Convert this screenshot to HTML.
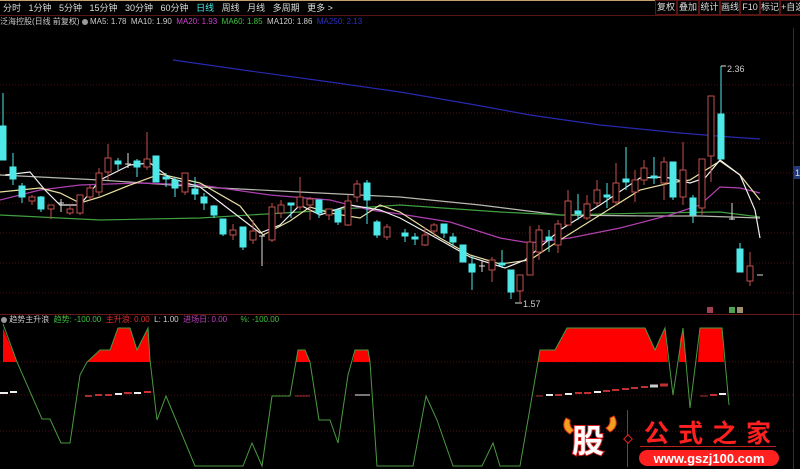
<!DOCTYPE html>
<html><head><meta charset="utf-8"><style>
html,body{margin:0;padding:0;background:#000;width:800px;height:469px;overflow:hidden;position:relative;font-family:"Liberation Sans","Noto Sans CJK SC",sans-serif}
.t{position:absolute;white-space:nowrap;font-size:8px;line-height:12px}
.b{border:1px solid #5a1515;text-align:center;white-space:nowrap;overflow:hidden;box-sizing:border-box;height:15px}
</style></head><body>
<div style="position:absolute;left:0;top:0;width:800px;height:1px;background:#c8a070"></div>
<div style="position:absolute;left:0;top:15px;width:800px;height:1px;background:#5a1515"></div>
<div class="t" style="left:3px;top:2px;color:#ddd;font-size:9px;word-spacing:0">分时&nbsp;&nbsp; 1分钟&nbsp;&nbsp; 5分钟&nbsp;&nbsp; 15分钟&nbsp;&nbsp; 30分钟&nbsp;&nbsp; 60分钟&nbsp;&nbsp; <span style="color:#4ee">日线</span>&nbsp;&nbsp; 周线&nbsp;&nbsp; 月线&nbsp;&nbsp; 多周期&nbsp;&nbsp; 更多 &gt;</div>
<div style="position:absolute;left:655px;top:0;height:15px;display:flex;font-size:9px;color:#ddd;line-height:13px">
<span class="b" style="width:22px">复权</span><span class="b" style="width:22px">叠加</span><span class="b" style="width:21px">统计</span><span class="b" style="width:20px">画线</span><span class="b" style="width:20px">F10</span><span class="b" style="width:20px">标记</span><span class="b" style="width:22px">+自选</span></div>
<div class="t" style="left:0;top:16px;color:#ccc">泛海控股(日线 前复权) <span style="display:inline-block;width:6px;height:6px;border-radius:50%;background:#999;vertical-align:-1px"></span> MA5: 1.78&nbsp; MA10: 1.90&nbsp; <span style="color:#d040d0">MA20: 1.93</span>&nbsp; <span style="color:#40c040">MA60: 1.85</span>&nbsp; MA120: 1.86&nbsp; <span style="color:#3030c0">MA250: 2.13</span></div>
<div class="t" style="left:1px;top:314px;color:#ccc"><span style="display:inline-block;width:6px;height:6px;border-radius:50%;background:#999;vertical-align:-1px"></span> 趋势主升浪&nbsp; <span style="color:#40c040">趋势: -100.00</span>&nbsp; <span style="color:#e03030">主升浪: 0.00</span>&nbsp; L: 1.00&nbsp; <span style="color:#c040c0">进场日: 0.00</span>&nbsp;&nbsp;&nbsp;&nbsp;&nbsp; <span style="color:#40c040">%: -100.00</span></div>
<svg width="800" height="469" style="position:absolute;left:0;top:0">
<g stroke="#4a1010" stroke-dasharray="1,2" stroke-width="1">
<line x1="0" y1="85" x2="793" y2="85"/><line x1="0" y1="113" x2="793" y2="113"/><line x1="0" y1="143" x2="793" y2="143"/><line x1="0" y1="173" x2="793" y2="173"/><line x1="0" y1="203" x2="793" y2="203"/><line x1="0" y1="233" x2="793" y2="233"/><line x1="0" y1="263" x2="793" y2="263"/><line x1="0" y1="293" x2="793" y2="293"/>
<line x1="0" y1="431" x2="793" y2="431"/><line x1="0" y1="395" x2="793" y2="395"/><line x1="0" y1="362" x2="793" y2="362"/>
</g>
<line x1="0" y1="314.5" x2="800" y2="314.5" stroke="#6a1818"/>
<line x1="793.5" y1="28" x2="793.5" y2="469" stroke="#6a1818"/>
<rect x="794" y="166" width="6" height="13" fill="#223a7a"/>
<text x="795" y="176" fill="#ddd" font-size="9">1.</text>
<g fill="none" stroke-width="1.2">
<polyline stroke="#2828b0" points="173,60 250,71 330,82 400,92 470,104 530,115 600,125 680,133 730,137 760,139"/>
<polyline stroke="#b8b8b0" points="0,175 100,180 200,187 300,192 400,197 480,205 560,215 650,216 700,216 760,218"/>
<polyline stroke="#40a040" points="0,215 100,220 200,218 300,212 400,205 500,212 560,215 650,213 720,212 760,217"/>
<polyline stroke="#b040b0" points="0,200 40,190 80,185 140,183 200,185 270,195 330,200 370,210 400,214 450,222 500,238 530,243 570,238 620,228 670,215 700,205 720,187 740,188 760,193"/>
<polyline stroke="#e8e0a0" points="0,192 40,188 60,193 80,203 100,197 130,185 160,174 200,183 240,206 263,235 290,221 310,207 330,213 360,218 380,205 400,212 440,238 470,255 500,264 530,260 560,240 600,215 640,190 670,183 690,180 720,161 740,175 760,200"/>
<polyline stroke="#f0f0f0" points="5,175 30,172 45,190 60,205 80,205 100,180 130,165 150,163 170,178 200,187 230,210 260,233 280,225 300,205 320,215 350,205 380,210 400,218 440,240 470,257 505,268 525,260 560,230 600,205 640,178 665,177 690,183 705,178 720,160 740,175 755,210 760,238"/>
</g>
<g fill="#4ee8e8" stroke="#4ee8e8">
<line x1="3" y1="93" x2="3" y2="160"/><rect x="0" y="126" width="6" height="34"/>
<line x1="13" y1="153" x2="13" y2="185"/><rect x="10" y="167" width="6" height="12"/>
<line x1="22" y1="183" x2="22" y2="203"/><rect x="19" y="186" width="6" height="11"/>
<line x1="41" y1="196" x2="41" y2="212"/><rect x="38" y="197" width="6" height="12"/>
<line x1="118" y1="158" x2="118" y2="170"/><rect x="115" y="161" width="6" height="3"/>
<line x1="137" y1="159" x2="137" y2="177"/><rect x="134" y="161" width="6" height="6"/>
<line x1="156" y1="156" x2="156" y2="182"/><rect x="153" y="156" width="6" height="26"/>
<line x1="166" y1="173" x2="166" y2="187"/><rect x="163" y="177" width="6" height="2"/>
<line x1="175" y1="177" x2="175" y2="197"/><rect x="172" y="180" width="6" height="8"/>
<line x1="195" y1="177" x2="195" y2="200"/><rect x="192" y="189" width="6" height="5"/>
<line x1="204" y1="193" x2="204" y2="210"/><rect x="201" y="197" width="6" height="6"/>
<line x1="214" y1="205" x2="214" y2="218"/><rect x="211" y="206" width="6" height="9"/>
<line x1="223" y1="219" x2="223" y2="236"/><rect x="220" y="219" width="6" height="15"/>
<line x1="243" y1="227" x2="243" y2="250"/><rect x="240" y="227" width="6" height="20"/>
<line x1="291" y1="203" x2="291" y2="218"/><rect x="288" y="203" width="6" height="2"/>
<line x1="319" y1="200" x2="319" y2="218"/><rect x="316" y="200" width="6" height="13"/>
<line x1="338" y1="210" x2="338" y2="225"/><rect x="335" y="210" width="6" height="12"/>
<line x1="367" y1="180" x2="367" y2="224"/><rect x="364" y="183" width="6" height="17"/>
<line x1="377" y1="220" x2="377" y2="238"/><rect x="374" y="222" width="6" height="13"/>
<line x1="405" y1="229" x2="405" y2="242"/><rect x="402" y="233" width="6" height="3"/>
<line x1="415" y1="233" x2="415" y2="245"/><rect x="412" y="237" width="6" height="2"/>
<line x1="444" y1="224" x2="444" y2="238"/><rect x="441" y="224" width="6" height="9"/>
<line x1="453" y1="233" x2="453" y2="246"/><rect x="450" y="237" width="6" height="5"/>
<line x1="463" y1="245" x2="463" y2="262"/><rect x="460" y="245" width="6" height="17"/>
<line x1="472" y1="256" x2="472" y2="290"/><rect x="469" y="264" width="6" height="8"/>
<line x1="502" y1="250" x2="502" y2="268"/><rect x="499" y="263" width="6" height="2"/>
<line x1="511" y1="270" x2="511" y2="299"/><rect x="508" y="270" width="6" height="22"/>
<line x1="549" y1="230" x2="549" y2="252"/><rect x="546" y="237" width="6" height="3"/>
<line x1="578" y1="194" x2="578" y2="220"/><rect x="575" y="211" width="6" height="3"/>
<line x1="607" y1="183" x2="607" y2="208"/><rect x="604" y="195" width="6" height="2"/>
<line x1="626" y1="147" x2="626" y2="190"/><rect x="623" y="179" width="6" height="3"/>
<line x1="654" y1="157" x2="654" y2="184"/><rect x="651" y="176" width="6" height="2"/>
<line x1="673" y1="162" x2="673" y2="200"/><rect x="670" y="162" width="6" height="35"/>
<line x1="693" y1="195" x2="693" y2="223"/><rect x="690" y="198" width="6" height="17"/>
<line x1="721" y1="66" x2="721" y2="159"/><rect x="718" y="114" width="6" height="45"/>
<line x1="740" y1="243" x2="740" y2="272"/><rect x="737" y="249" width="6" height="23"/>
</g>
<g stroke="#ddd">
<line x1="61" y1="199" x2="61" y2="212"/><line x1="58" y1="203" x2="64" y2="203"/>
<line x1="128" y1="153" x2="128" y2="168"/><line x1="125" y1="164" x2="131" y2="164"/>
<line x1="262" y1="236" x2="262" y2="266"/><line x1="259" y1="236" x2="265" y2="236"/>
<line x1="482" y1="260" x2="482" y2="272"/><line x1="479" y1="266" x2="485" y2="266"/>
<line x1="732" y1="203" x2="732" y2="220"/><line x1="729" y1="219" x2="735" y2="219"/>
<line x1="757" y1="275" x2="763" y2="275"/>
<line x1="721" y1="66" x2="726" y2="66"/><line x1="515" y1="303" x2="522" y2="303"/>
</g>
<text x="727" y="72" fill="#ccc" font-size="9">2.36</text>
<text x="523" y="307" fill="#ccc" font-size="9">1.57</text>
<g fill="#000" stroke="#c0504d">
<line x1="32" y1="195" x2="32" y2="205"/><rect x="29" y="197" width="6" height="4"/>
<line x1="51" y1="205" x2="51" y2="219"/><rect x="48" y="205" width="6" height="4"/>
<line x1="70" y1="205" x2="70" y2="215"/><rect x="67" y="209" width="6" height="4"/>
<line x1="80" y1="195" x2="80" y2="215"/><rect x="77" y="195" width="6" height="18"/>
<line x1="90" y1="185" x2="90" y2="200"/><rect x="87" y="188" width="6" height="9"/>
<line x1="99" y1="168" x2="99" y2="196"/><rect x="96" y="173" width="6" height="19"/>
<line x1="108" y1="144" x2="108" y2="180"/><rect x="105" y="158" width="6" height="14"/>
<line x1="147" y1="132" x2="147" y2="170"/><rect x="144" y="159" width="6" height="8"/>
<line x1="185" y1="173" x2="185" y2="195"/><rect x="182" y="173" width="6" height="19"/>
<line x1="233" y1="224" x2="233" y2="240"/><rect x="230" y="230" width="6" height="5"/>
<line x1="253" y1="220" x2="253" y2="244"/><rect x="250" y="231" width="6" height="9"/>
<line x1="272" y1="203" x2="272" y2="242"/><rect x="269" y="207" width="6" height="33"/>
<line x1="281" y1="200" x2="281" y2="218"/><rect x="278" y="205" width="6" height="8"/>
<line x1="300" y1="177" x2="300" y2="210"/><rect x="297" y="197" width="6" height="10"/>
<line x1="310" y1="197" x2="310" y2="220"/><rect x="307" y="199" width="6" height="6"/>
<line x1="329" y1="209" x2="329" y2="220"/><rect x="326" y="209" width="6" height="6"/>
<line x1="348" y1="195" x2="348" y2="226"/><rect x="345" y="201" width="6" height="24"/>
<line x1="357" y1="180" x2="357" y2="202"/><rect x="354" y="184" width="6" height="13"/>
<line x1="387" y1="224" x2="387" y2="240"/><rect x="384" y="227" width="6" height="10"/>
<line x1="425" y1="228" x2="425" y2="246"/><rect x="422" y="235" width="6" height="10"/>
<line x1="434" y1="223" x2="434" y2="236"/><rect x="431" y="225" width="6" height="6"/>
<line x1="492" y1="257" x2="492" y2="282"/><rect x="489" y="260" width="6" height="10"/>
<line x1="520" y1="275" x2="520" y2="302"/><rect x="517" y="275" width="6" height="16"/>
<line x1="530" y1="226" x2="530" y2="275"/><rect x="527" y="242" width="6" height="33"/>
<line x1="539" y1="225" x2="539" y2="260"/><rect x="536" y="230" width="6" height="22"/>
<line x1="558" y1="220" x2="558" y2="253"/><rect x="555" y="224" width="6" height="21"/>
<line x1="568" y1="190" x2="568" y2="226"/><rect x="565" y="201" width="6" height="24"/>
<line x1="587" y1="195" x2="587" y2="220"/><rect x="584" y="204" width="6" height="14"/>
<line x1="597" y1="180" x2="597" y2="206"/><rect x="594" y="190" width="6" height="13"/>
<line x1="616" y1="163" x2="616" y2="206"/><rect x="613" y="183" width="6" height="19"/>
<line x1="635" y1="170" x2="635" y2="202"/><rect x="632" y="180" width="6" height="12"/>
<line x1="644" y1="160" x2="644" y2="185"/><rect x="641" y="168" width="6" height="12"/>
<line x1="664" y1="157" x2="664" y2="200"/><rect x="661" y="162" width="6" height="21"/>
<line x1="683" y1="142" x2="683" y2="205"/><rect x="680" y="170" width="6" height="27"/>
<line x1="702" y1="159" x2="702" y2="215"/><rect x="699" y="159" width="6" height="49"/>
<line x1="711" y1="96" x2="711" y2="182"/><rect x="708" y="96" width="6" height="60"/>
<line x1="750" y1="252" x2="750" y2="286"/><rect x="747" y="266" width="6" height="15"/>
</g>
<rect x="707" y="307" width="6" height="6" fill="#a04050"/>
<rect x="729" y="307" width="6" height="6" fill="#50a050"/>
<rect x="737" y="307" width="6" height="6" fill="#a09070"/>
<g fill="#ff0000">
<polygon points="3,328 17,362 3,362"/>
<polygon points="87,362 100,350 110,350 118,328 130,328 137,350 148,328 150,362"/>
<polygon points="298,350 305,350 310,362 296,362"/>
<polygon points="355,350 368,350 370,362 353,362"/>
<polygon points="538,362 540,350 555,350 567,328 645,328 655,350 665,328 668,362"/>
<polygon points="680,340 683,328 686,362 679,362"/>
<polygon points="700,328 722,328 724,362 698,362"/>
</g>
<polyline fill="none" stroke="#4a9a40" stroke-width="1" points="3,324 17,362 42,419 50,419 61,443 70,443 80,375 87,362 100,350 110,350 118,328 130,328 137,350 148,328 150,360 157,420 166,396 195,466 243,466 252,443 262,466 272,396 290,396 298,350 305,350 310,362 319,420 330,420 338,443 348,375 355,350 368,350 370,362 377,466 413,466 426,396 437,420 453,466 482,466 493,443 500,466 520,466 538,362 540,350 555,350 567,328 645,328 655,350 665,328 673,395 683,328 690,408 700,328 722,328 729,405"/>
<g stroke-width="2">
<line x1="0" y1="393" x2="8" y2="393" stroke="#eee"/><line x1="10" y1="392" x2="17" y2="392" stroke="#eee"/>
<line x1="85" y1="396" x2="92" y2="396" stroke="#a03030"/><line x1="95" y1="395" x2="102" y2="395" stroke="#c03030"/><line x1="105" y1="395" x2="112" y2="395" stroke="#c03030"/><line x1="115" y1="394" x2="122" y2="394" stroke="#eee"/><line x1="124" y1="393" x2="132" y2="393" stroke="#c03030"/><line x1="134" y1="393" x2="141" y2="393" stroke="#eee"/><line x1="144" y1="392" x2="151" y2="392" stroke="#d03030"/>
<line x1="295" y1="396" x2="310" y2="396" stroke="#a03030" stroke-width="1"/><line x1="355" y1="395" x2="370" y2="395" stroke="#eee" stroke-width="1"/>
<line x1="536" y1="396" x2="543" y2="396" stroke="#a03030" stroke-width="1"/><line x1="546" y1="395" x2="553" y2="395" stroke="#eee"/><line x1="555" y1="395" x2="562" y2="395" stroke="#c03030"/><line x1="565" y1="394" x2="572" y2="394" stroke="#eee"/><line x1="575" y1="393" x2="582" y2="393" stroke="#c03030"/><line x1="584" y1="393" x2="591" y2="393" stroke="#c03030"/><line x1="594" y1="392" x2="601" y2="392" stroke="#eee"/><line x1="603" y1="391" x2="610" y2="391" stroke="#c03030"/><line x1="612" y1="390" x2="619" y2="390" stroke="#c03030"/><line x1="622" y1="389" x2="629" y2="389" stroke="#c03030"/><line x1="631" y1="388" x2="638" y2="388" stroke="#c03030"/><line x1="641" y1="387" x2="648" y2="387" stroke="#c03030"/><line x1="650" y1="386" x2="658" y2="386" stroke="#ccc" stroke-width="3"/><line x1="660" y1="385" x2="668" y2="385" stroke="#c03030" stroke-width="3"/>
<line x1="700" y1="396" x2="708" y2="396" stroke="#a03030" stroke-width="1"/><line x1="710" y1="395" x2="717" y2="395" stroke="#c03030"/><line x1="719" y1="394" x2="726" y2="394" stroke="#eee"/>
</g>
<path d="M566,418 q-6,10 4,16 l4,-4 q-5,-3 -4,-10z" fill="#f0a020" stroke="#e03010"/>
<path d="M614,416 q6,10 -4,16 l-4,-4 q5,-3 4,-10z" fill="#f0a020" stroke="#e03010"/>
<text x="572" y="452" font-size="32" font-weight="bold" fill="#fff" stroke="#e02020" stroke-width="2" paint-order="stroke" font-family="Noto Sans CJK SC,sans-serif">股</text>
<line x1="627.5" y1="410" x2="627.5" y2="467" stroke="#c02020"/>
<rect x="625" y="436" width="6" height="6" transform="rotate(45 628 439)" fill="#000" stroke="#e02020"/>
<text x="644" y="442" font-size="25" fill="#ff2020" font-weight="bold" letter-spacing="9" font-family="Noto Sans CJK SC,sans-serif">公式之家</text>
<line x1="640" y1="446.5" x2="776" y2="446.5" stroke="#c02020"/>
<rect x="639" y="450" width="140" height="16" rx="8" fill="#ff2020"/>
<text x="709" y="463" font-size="13" fill="#fff" font-weight="bold" text-anchor="middle" font-family="Liberation Sans,sans-serif">www.gszj100.com</text>
</svg>
</body></html>
